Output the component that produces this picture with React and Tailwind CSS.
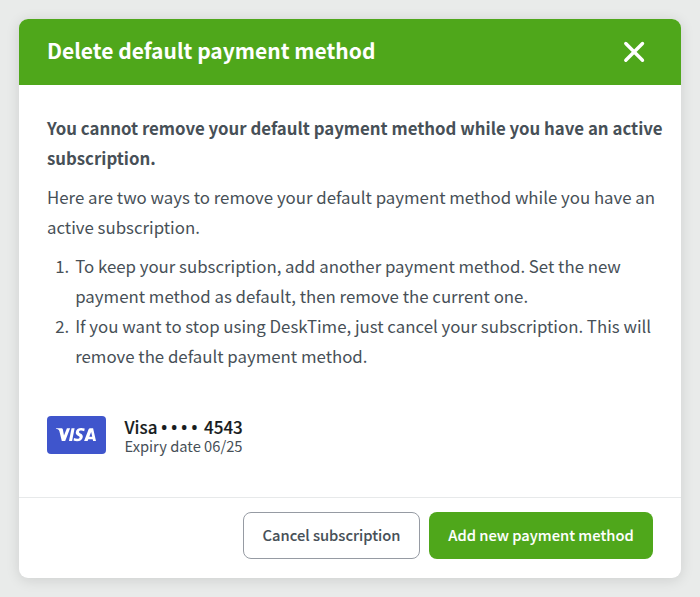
const steps = [
  ['To keep your subscription, add another payment method. Set the new', 'payment method as default, then remove the current one.'],
  ['If you want to stop using DeskTime, just cancel your subscription. This will', 'remove the default payment method.'],
];

function CloseIcon() {
  return (
    <svg width="22" height="22" viewBox="0 0 22 22" fill="none" stroke="white" strokeWidth="3.4" strokeLinecap="round">
      <path d="M2.8 2.5 19.5 19.2M19.5 2.5 2.8 19.2" />
    </svg>
  );
}

function VisaCard() {
  return (
    <svg width="59" height="38" viewBox="0 0 59 38" className="shrink-0">
      <rect width="59" height="38" rx="4" fill="#3f55cc" />
      <g fill="white">
        <path d="M9 12.2H14.1C15.1 12.2 15.7 12.6 15.9 13.6L17 19.6 19.9 12.2H23.1L18.2 25.1H14.8L12.4 15.2C12.2 14.4 11.9 14 11.2 13.6 10.5 13.2 9.7 12.9 8.9 12.7Z" />
        <path d="M24.5 12.2H27.6L25.1 25.1H22Z" />
        <path d="M37.7 12.6 37.2 15.2C34.4 14.1 32 14.6 32 15.9 32 17.5 36.3 17.5 35.8 21 35.3 24.9 30.8 26.1 26.5 24.6L27 21.9C29.8 23.2 32.5 22.7 32.6 21.4 32.7 19.8 28.5 19.7 28.8 16.3 29.1 12.5 33.2 11.1 37.7 12.6Z" />
        <path fillRule="evenodd" d="M43.1 12.2H46.1L49 25.1H46.1L45.7 23.2H41.3L40.6 25.1H37.1L41.6 13.2C41.9 12.5 42.4 12.2 43.1 12.2ZM44.2 16 42.3 20.8H45.2Z" />
      </g>
    </svg>
  );
}

export default function App() {
  return (
    <div className="h-[597px] w-[700px] overflow-hidden bg-[#e9ebea] pl-[19px] pt-[19px] font-['Noto_Sans_CJK_SC',sans-serif] text-[#475057]">
      <div className="flex h-[559px] w-[662px] flex-col overflow-hidden rounded-[9px] bg-white shadow-[0_2px_14px_rgba(0,0,0,0.12)]">
        <header className="flex h-[65.5px] shrink-0 items-center justify-between bg-[#4fa71b] pl-7 pr-9 text-white">
          <h1 className="whitespace-nowrap pb-[3px] text-[21px] font-bold leading-[30px]">Delete default payment method</h1>
          <button aria-label="Close"><CloseIcon /></button>
        </header>
        <main className="flex grow flex-col whitespace-nowrap pl-7 pt-[28.5px] text-[16.82px] leading-[30px]">
          <p className="font-bold">You cannot remove your default payment method while you have an active<br />subscription.</p>
          <p className="mt-[8.5px]">Here are two ways to remove your default payment method while you have an<br />active subscription.</p>
          <ol className="mt-[9px] list-decimal pl-[26px]">
            {steps.map((lines) => (
              <li key={lines[0]} className="pl-[2.2px]">{lines[0]}<br />{lines[1]}</li>
            ))}
          </ol>
          <div className="mt-[45px] flex items-start gap-[18.5px]">
            <VisaCard />
            <div className="pt-[1px]">
              <div className="flex h-[19.5px] text-[17px] font-medium leading-[20px] text-[#171c20] [-webkit-text-stroke:0.15px]">
                <span className="w-[34.5px]">Visa</span>
                <span className="flex w-[45px] font-['Open_Sans',sans-serif]">
                  {[0, 1, 2, 3].map((i) => (
                    <span key={i} className="flex w-[10.1px] justify-center text-[15.5px] font-bold">•</span>
                  ))}
                </span>
                <span>4543</span>
              </div>
              <div className="text-[14.7px] leading-[20px]">Expiry date 06/25</div>
            </div>
          </div>
        </main>
        <footer className="flex h-[81px] shrink-0 items-start justify-end gap-[9px] whitespace-nowrap border-t border-[#e7e9ea] pr-7 pt-[14px] text-[14.72px] font-medium [-webkit-text-stroke:0.08px]">
          <button className="h-[47px] w-[177px] rounded-[8px] border border-[#969ba3]">Cancel subscription</button>
          <button className="h-[47px] w-[224px] rounded-[8px] bg-[#4fa71b] text-white">Add new payment method</button>
        </footer>
      </div>
    </div>
  );
}
